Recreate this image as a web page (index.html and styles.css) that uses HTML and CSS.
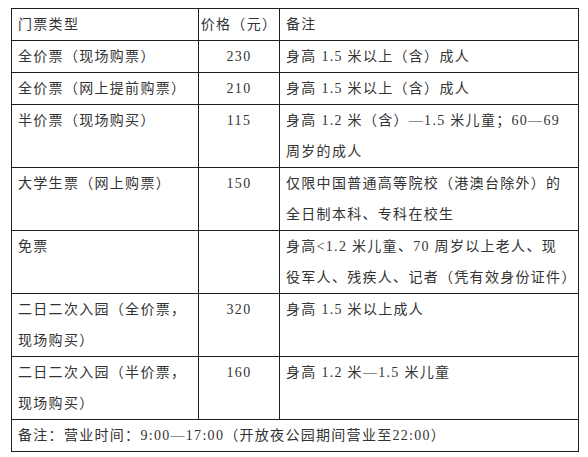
FILE: index.html
```html
<!DOCTYPE html>
<html lang="zh-CN">
<head>
<meta charset="utf-8">
<title>门票类型</title>
<link rel="stylesheet" href="styles.css">
</head>
<body>
<table class="tickets">
  <colgroup>
    <col class="c-type">
    <col class="c-price">
    <col class="c-note">
  </colgroup>
  <tr>
    <td>门票类型</td>
    <td class="price">价格（元）</td>
    <td>备注</td>
  </tr>
  <tr>
    <td>全价票（现场购票）</td>
    <td class="price">230</td>
    <td>身高 1.5 米以上（含）成人</td>
  </tr>
  <tr>
    <td>全价票（网上提前购票）</td>
    <td class="price">210</td>
    <td>身高 1.5 米以上（含）成人</td>
  </tr>
  <tr>
    <td>半价票（现场购买）</td>
    <td class="price">115</td>
    <td>身高 1.2 米（含）—1.5 米儿童；60—69<br>周岁的成人</td>
  </tr>
  <tr>
    <td>大学生票（网上购票）</td>
    <td class="price">150</td>
    <td>仅限中国普通高等院校（港澳台除外）的<br>全日制本科、专科在校生</td>
  </tr>
  <tr>
    <td>免票</td>
    <td class="price"></td>
    <td>身高&lt;1.2 米儿童、70 周岁以上老人、现<br>役军人、残疾人、记者（凭有效身份证件）</td>
  </tr>
  <tr>
    <td>二日二次入园（全价票，<br>现场购买）</td>
    <td class="price">320</td>
    <td>身高 1.5 米以上成人<br>&nbsp;</td>
  </tr>
  <tr>
    <td>二日二次入园（半价票，<br>现场购买）</td>
    <td class="price">160</td>
    <td>身高 1.2 米—1.5 米儿童<br>&nbsp;</td>
  </tr>
  <tr>
    <td colspan="3">备注：营业时间：9:00—17:00（开放夜公园期间营业至22:00）</td>
  </tr>
</table>
</body>
</html>
```

FILE: styles.css
```css
html, body {
  margin: 0;
  padding: 0;
  background: #ffffff;
}

body {
  padding: 8px 0 0 11px;
}

.tickets {
  border-collapse: collapse;
  table-layout: fixed;
  width: 567px;
  font-family: "Liberation Serif", "Noto Sans CJK SC", serif;
  font-size: 14px;
  letter-spacing: 1.3px;
  color: #333333;
}

.c-type { width: 187px; }
.c-price { width: 81px; }
.c-note { width: 299px; }

.tickets td {
  border: 1px solid #1e1e1e;
  padding: 0 0 0 6px;
  line-height: 31px;
  vertical-align: top;
  white-space: nowrap;
  overflow: hidden;
}

.tickets td.price {
  text-align: center;
  padding: 0;
}
```
